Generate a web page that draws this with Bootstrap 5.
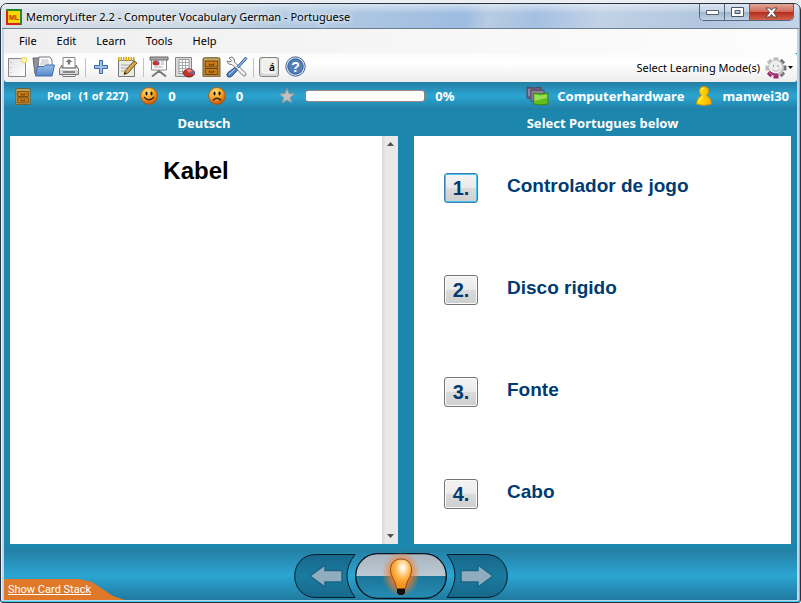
<!DOCTYPE html>
<html lang="en">
<head>
<meta charset="utf-8">
<meta name="viewport" content="width=device-width, initial-scale=1">
<title>MemoryLifter 2.2 - Computer Vocabulary German - Portuguese</title>
<link rel="stylesheet" href="https://cdn.jsdelivr.net/npm/bootstrap@5.3.0/dist/css/bootstrap.min.css">
<style>
:root{--teal:#1c86ac;--navy:#003b72}
body{font-family:"Noto Sans","Open Sans",sans-serif;font-size:11px;line-height:16px;color:#000;background:#eceef1;padding-top:3px}
svg{display:block;flex:none}
button,.plain-btn{border:0;background:none;padding:0;color:inherit}
.app-window{border:1px solid #263442;border-radius:7px 7px 3px 3px;background:#c3d4e8;padding:0 3px 2px;box-shadow:inset -1px -1px #3fc8ee,inset 1px 0 #eef4fa;overflow:hidden;min-height:calc(100vh - 3px)}
.title-bar{height:25px;margin:0 -2px;padding:2px 2px 0 4px;background:linear-gradient(#ffffff80,#ffffff00 40%),linear-gradient(100deg,#d5dde6 0,#ccd9e5 25%,#b5cce2 34%,#a9c4e2 48%,#9dbce0 58%,#b8cce2 61%,#a4c0e2 67%,#c2d2e6 75%,#b1c6df 88%,#c3d4e8);border-bottom:1px solid #6f7c8c}
.title-text{text-shadow:0 0 5px #fff,0 0 7px #fff}
.caption-group{border:1px solid #55677c;border-top:0;border-radius:0 0 5px 5px;height:17px;margin-top:-2px;overflow:hidden;margin-right:3px}
.caption-group button{width:25px;display:flex;align-items:center;justify-content:center;border-right:1px solid #55677c;background:linear-gradient(#dce6f1,#c4d2e2 48%,#a0b4ca 50%,#c1d3e6)}
.caption-group .close-btn{width:43px;border:0;background:linear-gradient(#e5a596,#cf6a58 48%,#b02a1b 50%,#d0644b)}
.main-menu{height:24px;background:linear-gradient(90deg,#efeff0,#fdfdfd);padding-left:5px}
.main-menu .nav-link{color:#000;padding:0 10px;line-height:24px}
.tool-strip{height:29px;background:linear-gradient(#fbfbfb,#fff 35%,#ededed);border-radius:0 3px 3px 3px}
.tool-strip .tool-btn{width:26px;height:28px;display:flex;align-items:center;justify-content:center;padding-bottom:2px}
.tool-sep{width:6px;display:flex;justify-content:center}
.tool-sep::before{content:"";width:1px;height:19px;background:#c2c2c2}
.client-area{background:var(--teal)}
.status-strip{height:28px;background:linear-gradient(#247ea3,#2ba5d2 50%,#207fa5);color:#fff;font-size:13px;font-weight:700;padding:0 8px 0 11px}
.status-small{font-size:11px}
.gap-s{margin-left:10px}
.gap-m{margin-left:12px}
.gap-l{margin-left:32px}
.score-bar{appearance:none;width:120px;height:12px;border:1px solid #9c8578;border-radius:3px;background:#fff;overflow:hidden}
.score-bar::-webkit-progress-bar{background:#fff}
.card-grid{display:grid;grid-template-columns:388fr 377fr;column-gap:16px;padding:0 6px}
.side-title{font-size:13px;font-weight:700;color:#fff;text-align:center;line-height:26px;margin:0}
.card-pane{background:#fff;height:calc(100vh - 195px);min-height:390px}
.question{font:700 24px/28px "Liberation Sans",Arial,sans-serif;color:#000;padding-top:21px}
.scroll-track{width:16px;background:linear-gradient(90deg,#d9d9d9,#e9e9e9 25%,#e9e9e9);padding:6px 0}
.answer-list{padding:37px 30px 0}
.answer-row{height:102px;gap:29px;font:700 19px/26px "Liberation Sans",Arial,sans-serif;color:var(--navy)}
.answer-btn{width:34px;height:30px;font-size:20px;font-weight:700;border:1px solid #747474;border-radius:3px;background:linear-gradient(#f3f3f3,#ebebeb 48%,#dbdbdb 50%,#cecece);box-shadow:inset 0 0 0 1px #fbfbfb}
.answer-btn.is-default{border-color:#3b7fae;box-shadow:inset 0 0 0 1px #41c8f0}
.foot-bar{height:56px;border-top:5px solid var(--teal);background:linear-gradient(#247ea3,#2ba5d2 52%,#207a9f);background-clip:padding-box;position:relative}
.nav-cluster{height:51px;padding-top:2px}
.stack-link{position:absolute;left:0;bottom:0;width:121px;height:21px;background:#df7828;color:#fff;font-family:Roboto,sans-serif;line-height:21px;padding-left:4px;clip-path:polygon(0 0,75px 0,88px 3px,97px 9px,109px 17px,121px 21px,0 21px)}
.stack-link:hover{color:#fff}
</style>
<script src="https://cdn.jsdelivr.net/npm/bootstrap@5.3.0/dist/js/bootstrap.bundle.min.js"></script>
</head>
<body>
<svg width="0" height="0" class="position-absolute" aria-hidden="true">
<defs>
<radialGradient id="face" cx=".4" cy=".25" r=".75"><stop offset="0" stop-color="#ffdf73"/><stop offset=".5" stop-color="#f9a92c"/><stop offset="1" stop-color="#c85208"/></radialGradient>
<linearGradient id="folder" x2="0" y2="1"><stop stop-color="#9dbde6"/><stop offset="1" stop-color="#5687c8"/></linearGradient>
<linearGradient id="sheet" x2="1" y2="1"><stop stop-color="#e2e2e2"/><stop offset="1" stop-color="#fff"/></linearGradient>
<linearGradient id="glass" x2="0" y2="1"><stop stop-color="#a9b4bd"/><stop offset=".5" stop-color="#bccad5"/><stop offset=".5" stop-color="#1b7699"/><stop offset="1" stop-color="#268cb3"/></linearGradient>
<linearGradient id="wing" x2="0" y2="1"><stop stop-color="#18678a"/><stop offset=".5" stop-color="#1a7ba0"/><stop offset="1" stop-color="#16688a"/></linearGradient>
<radialGradient id="halo"><stop offset="0" stop-color="#ff7a22"/><stop offset=".5" stop-color="#ff7a22" stop-opacity=".8"/><stop offset="1" stop-color="#ff7a22" stop-opacity="0"/></radialGradient>
<radialGradient id="lamp" cx=".58" cy=".3" r=".6"><stop stop-color="#fff"/><stop offset=".25" stop-color="#ffe5bd"/><stop offset=".6" stop-color="#ffb247"/><stop offset="1" stop-color="#f59220"/></radialGradient>
<linearGradient id="gold" x2="1"><stop stop-color="#ffe900"/><stop offset="1" stop-color="#ffae00"/></linearGradient>
<symbol id="cabinet" viewBox="0 0 18 20" preserveAspectRatio="none"><path d="M1 2Q1 .7 3 .7H15Q17 .7 17 2V19.3H1Z" fill="#c1a96b" stroke="#6f5218"/><path d="M3 4H15V10H3ZM3 11.500H15V17.500H3Z" fill="#c97b17" stroke="#75430a"/><path d="M7 6.500V8H11V6.500M7 13.500V15H11V13.500" fill="none" stroke="#5c3507"/></symbol>
</defs></svg>

<div class="app-window d-flex flex-column">
<header class="title-bar d-flex align-items-center">
<svg width="16" height="16" viewBox="0 0 16 16"><path d="M0 0H16V16H0Z" fill="#26852f"/><path d="M0 2H2V14H14V16H0Z" fill="#dc2114"/><path d="M2 2H14V14H2Z" fill="#ffd800"/><text x="8" y="11" text-anchor="middle" font-family="Liberation Sans" font-size="7" font-weight="700" fill="#d12512">ML</text></svg>
<span class="title-text ms-1">MemoryLifter 2.2 - Computer Vocabulary German - Portuguese</span>
<div class="caption-group d-flex ms-auto align-self-start">
<button type="button" aria-label="Minimize"><svg width="13" height="6" viewBox="0 0 13 6"><path d="M.5 1.500H12.500V5.500H.5Z" fill="#fff" stroke="#55606e"/></svg></button>
<button type="button" aria-label="Maximize"><svg width="13" height="10" viewBox="0 0 13 10"><path d="M.5.5H12.500V9.500H.5ZM4 3.500V6.500H9V3.500Z" fill="#fff" fill-rule="evenodd" stroke="#4b5663"/></svg></button>
<button type="button" class="close-btn" aria-label="Close"><svg width="13" height="11" viewBox="0 0 13 11"><path d="M1 1H4.500L6.500 3.200 8.500 1H12L8.500 5.400 12 10H8.500L6.500 7.600 4.500 10H1L4.500 5.400Z" fill="#fff" stroke="#59464c"/></svg></button>
</div>
</header>

<nav class="main-menu nav flex-nowrap" aria-label="Main">
<a class="nav-link" href="#">File</a><a class="nav-link" href="#">Edit</a><a class="nav-link" href="#">Learn</a><a class="nav-link" href="#">Tools</a><a class="nav-link" href="#">Help</a>
</nav>

<div class="client-area d-flex flex-column flex-grow-1">
<div class="tool-strip d-flex align-items-center" role="toolbar" aria-label="Tools">
<button class="tool-btn" type="button" aria-label="New"><svg width="20" height="22" viewBox="0 0 20 22"><path d="M1.500 2.500H18.500V20.500H1.500Z" fill="url(#sheet)" stroke="#888"/><path d="M4 6V18" stroke="#aaa" stroke-dasharray="1 4"/><circle cx="17" cy="4" r="2.500" fill="#fff9cf" stroke="#eddf68" stroke-width="1.500"/></svg></button>
<button class="tool-btn" type="button" aria-label="Open"><svg width="23" height="22" viewBox="0 0 23 22"><path d="M1 2H7L8 4H18V18H3Z" fill="#8c9299" stroke="#666"/><path d="M7 1H18L20 4V13H6Z" fill="#fff" stroke="#777"/><path d="M9 4H16M9 6H17M8 8H17" stroke="#bbb"/><path d="M5.500 10.500H12L13.500 9H22.500L20 20H3.500Z" fill="url(#folder)" stroke="#3e6cad"/></svg></button>
<button class="tool-btn" type="button" aria-label="Print"><svg width="22" height="22" viewBox="0 0 22 22"><path d="M5 1.500H17V12H5Z" fill="#fff" stroke="#888"/><path d="M11 3L7.500 6H9.800V8.500H12.200V6H14.500Z" fill="#777"/><path d="M4 9L1.500 13V18.500H20.500V13L18 9V12H4Z" fill="#d8d8d8" stroke="#777"/><path d="M2 13.500H20" stroke="#fff"/><path d="M5 15H17V17H5Z" fill="#888"/><path d="M4 18.500H18L17 20.500H5Z" fill="#eee" stroke="#777"/></svg></button>
<span class="tool-sep"></span>
<button class="tool-btn" type="button" aria-label="Add card"><svg width="16" height="16" viewBox="0 0 16 16"><path d="M6.500 1.500H9.500V6.500H14.500V9.500H9.500V14.500H6.500V9.500H1.500V6.500H6.500Z" fill="#a0bfe4" stroke="#3c69a9"/></svg></button>
<button class="tool-btn" type="button" aria-label="Edit card"><svg width="22" height="22" viewBox="0 0 22 22"><path d="M2.500 4.500H18.500V20.500H2.500Z" fill="#ebebe6" stroke="#777"/><path d="M2 3H19" stroke="#d2a70b" stroke-width="4" stroke-dasharray="1.500 1"/><path d="M5 9H14M5 12H12M5 15H11" stroke="#aaa"/><path d="M18 5L21 7 12 17 8 18.500 9.500 14.500Z" fill="#d9a54c" stroke="#70501e"/><path d="M8 18.500L9 16 10.500 17.500Z" fill="#222"/></svg></button>
<span class="tool-sep"></span>
<button class="tool-btn" type="button" aria-label="Slide show"><svg width="20" height="22" viewBox="0 0 20 22"><path d="M10 13V17M10 15L3 20.500M10 15L17 20.500" stroke="#777" stroke-width="2"/><path d="M2.500 3H17.500V14H2.500Z" fill="#fff" stroke="#888"/><path d="M1 1H19V4H1Z" fill="#aaa" stroke="#666"/><ellipse cx="7" cy="7" rx="3.500" ry="2.500" fill="#cc2d25"/><path d="M7 7L9 4.500 10.500 7Z" fill="#4e8cda"/><path d="M12 6H15M12 8H15M5 11H14" stroke="#aaa"/></svg></button>
<button class="tool-btn" type="button" aria-label="Statistics"><svg width="22" height="22" viewBox="0 0 22 22"><path d="M1.500 1.500H17.500V20.500H1.500Z" fill="#d9d9d9" stroke="#888"/><path d="M5 3.500H15V17.500H5Z" fill="#fff" stroke="#999"/><path d="M5 6.500H15M5 9.500H15M5 12.500H15M5 15.500H10M8.500 4V17M11.500 4V13" stroke="#aaa"/><ellipse cx="15" cy="17" rx="5.500" ry="4" fill="#c93228" stroke="#702020"/><path d="M15 17L12 13.500Q16 12 19 14.500Z" fill="#ef8178"/><path d="M15 17L19 14.500Q21 16 20.500 18Z" fill="#5379b9"/></svg></button>
<button class="tool-btn" type="button" aria-label="Card boxes"><svg width="19" height="20"><use href="#cabinet"/></svg></button>
<button class="tool-btn" type="button" aria-label="Options"><svg width="22" height="22" viewBox="0 0 22 22"><path d="M3 2L6 1Q9 2 8.500 6L19 16.500Q21 18 19.500 19.500 18 21 16.500 19L6 8.500Q2 9 1 5L4 6 5.500 4.500Z" fill="#f3f3f3" stroke="#777"/><path d="M19.500 1L21 2.500 12.500 12 11 10.500Z" fill="#87ace0" stroke="#4268a0"/><path d="M9 11.500L11.500 14 6 20Q3 22 1.500 20.500 0 19 2 16.500Z" fill="#5587c9" stroke="#244c88"/><path d="M3 18.500L9 13" stroke="#bad1f0"/></svg></button>
<span class="tool-sep"></span>
<button class="tool-btn" type="button" aria-label="Character map"><svg width="20" height="20" viewBox="0 0 20 20"><rect x=".5" y=".5" width="19" height="19" rx="2" fill="#d7d8d4" stroke="#858681"/><rect x="3" y="2" width="14" height="14" rx="2" fill="#efefeb" stroke="#fff"/><text x="13" y="14" text-anchor="middle" font-family="Noto Sans" font-weight="600" font-size="10">á</text></svg></button>
<button class="tool-btn" type="button" aria-label="Help"><svg width="21" height="21" viewBox="0 0 21 21"><circle cx="10.500" cy="10.500" r="9.700" fill="#dce7f5" stroke="#496792"/><circle cx="10.500" cy="10.500" r="7.700" fill="#527fba" stroke="#315a95"/><text x="10.500" y="15.500" text-anchor="middle" font-family="Liberation Sans" font-weight="700" font-size="14" fill="#fff">?</text></svg></button>
<button class="plain-btn d-flex align-items-center ms-auto me-1" type="button"><span>Select Learning Mode(s)</span>
<svg class="ms-1" width="24" height="24" viewBox="0 0 24 24"><g stroke-width="5" fill="none"><path d="M12 12V1.500M12 12L4.600 4.600M12 12H1.500" stroke="#b9b9b9"/><path d="M12 12L19.400 4.600M12 12H22.500M12 12L19.400 19.400" stroke="#777"/><path d="M12 12L4.600 19.400M12 12V22.500" stroke="#a3246a"/></g><circle cx="12" cy="12" r="8" fill="#c4c4c4"/><path d="M5 15A8 8 0 0 0 15 19.400L12 16Z" fill="#a3246a"/><circle cx="11.500" cy="11" r="6.500" fill="#eee"/><path d="M9.500 9V11M14 9V11" stroke="#999"/><path d="M8.500 13Q12 17 15.500 13" fill="#fff" stroke="#aaa"/></svg>
<svg width="5" height="3" viewBox="0 0 5 3"><path d="M0 0H5L2.500 3Z"/></svg></button>
</div>

<div class="status-strip d-flex align-items-center text-nowrap">
<svg width="16" height="17"><use href="#cabinet"/></svg>
<span class="status-small ms-3">Pool</span><span class="status-small ms-2">(1 of 227)</span>
<svg class="gap-m" width="18" height="18" viewBox="0 0 18 18" role="img" aria-label="Right answers"><circle cx="9" cy="9" r="8.500" fill="url(#face)" stroke="#ad4b08" stroke-width=".7"/><ellipse cx="6.500" cy="6.500" rx="1" ry="2"/><ellipse cx="11.500" cy="6.500" rx="1" ry="2"/><path d="M4 10Q9 15.500 14 10" fill="none" stroke="#43220b" stroke-width="1.300"/></svg>
<span class="gap-s">0</span>
<svg class="gap-l" width="18" height="18" viewBox="0 0 18 18" role="img" aria-label="Wrong answers"><circle cx="9" cy="9" r="8.500" fill="url(#face)" stroke="#ad4b08" stroke-width=".7"/><ellipse cx="6.500" cy="6.500" rx="1" ry="2"/><ellipse cx="11.500" cy="6.500" rx="1" ry="2"/><path d="M5 13.500Q9 9 13 13.500" fill="none" stroke="#43220b" stroke-width="1.300"/></svg>
<span class="gap-s me-1">0</span>
<svg class="gap-l" width="16" height="16" viewBox="0 0 16 16"><path d="M8 .5L10 5.500 15.500 6 11.300 9.500 12.800 15 8 12 3.200 15 4.700 9.500.5 6 6 5.500Z" fill="#bfc2c3" stroke="#8c9295"/></svg>
<progress class="score-bar gap-s" value="0" max="100" aria-label="Score"></progress><span class="gap-s">0%</span>
<svg class="ms-auto" width="23" height="20" viewBox="0 0 23 20"><path d="M1 1Q8 3 15 1V12Q8 14 1 12Z" fill="#70607b" stroke="#51465b"/><path d="M3 3V10" stroke="#b4a9be"/><path d="M5 4Q12 5 18 4V15Q11 17 5 15Z" fill="#8e8098" stroke="#564b60"/><path d="M7.500 7Q15 9 22 7V18Q15 20 7.500 18Z" fill="#62bd1d" stroke="#3b8515"/><path d="M8.500 8.500Q15 10 21 8.500V12Q15 13 8.500 15Z" fill="#98dd55"/></svg>
<span class="ms-2">Computerhardware</span>
<svg class="gap-m" width="16" height="20" viewBox="0 0 16 20"><path d="M8 .7Q12.500.7 12.500 5 12.500 7.500 10.500 9.500 15.300 12 15.300 18 8 20.500.7 18 .7 12 5.500 9.500 3.500 7.500 3.500 5 3.500.7 8 .7Z" fill="url(#gold)" stroke="#dc9500"/><path d="M3 16Q4 12 7 10.500M5 5Q5 2 8 2" fill="none" stroke="#fff79d"/></svg>
<span class="gap-s">manwei30</span>
</div>

<main class="card-grid flex-grow-1">
<section><h2 class="side-title">Deutsch</h2>
<div class="card-pane d-flex"><div class="question flex-grow-1 text-center">Kabel</div>
<div class="scroll-track d-flex flex-column justify-content-between align-items-center"><button type="button" aria-label="Scroll up"><svg width="7" height="4"><path d="M0 4H7L3.500 0Z" fill="#505050"/></svg></button><button type="button" aria-label="Scroll down"><svg width="7" height="4"><path d="M0 0H7L3.500 4Z" fill="#505050"/></svg></button></div></div></section>
<section><h2 class="side-title">Select Portugues below</h2>
<div class="card-pane answer-list">
<div class="answer-row d-flex align-items-start"><button id="a1" class="answer-btn is-default" type="button">1.</button><label for="a1">Controlador de jogo</label></div>
<div class="answer-row d-flex align-items-start"><button id="a2" class="answer-btn" type="button">2.</button><label for="a2">Disco rigido</label></div>
<div class="answer-row d-flex align-items-start"><button id="a3" class="answer-btn" type="button">3.</button><label for="a3">Fonte</label></div>
<div class="answer-row d-flex align-items-start"><button id="a4" class="answer-btn" type="button">4.</button><label for="a4">Cabo</label></div>
</div></section>
</main>

<footer class="foot-bar">
<div class="nav-cluster d-flex justify-content-center">
<button type="button" aria-label="Previous"><svg width="61" height="46" viewBox="0 0 61 46" overflow="visible"><path d="M22 1.500H61Q45 22 61 44.500H22C8 44.500.7 34 .7 23S8 1.500 22 1.500Z" fill="url(#wing)" stroke="#001e2c"/><path d="M16 23L31 12V17.500H48V29H31V34Z" fill="#8fadbf" stroke="#1b6585" stroke-width="1.500"/></svg></button>
<button type="button" aria-label="Show answer"><svg width="92" height="46" viewBox="0 0 92 46"><rect x=".7" y=".7" width="90.600" height="44.600" rx="22" fill="url(#glass)" stroke="#061018" stroke-width="1.300"/><ellipse cx="46" cy="21" rx="19" ry="23" fill="url(#halo)"/><path d="M46 6C39 6 35.500 11 35.500 16.500 35.500 24 40.500 27 41.500 35.500H50.500C51.500 27 56.500 24 56.500 16.500 56.500 11 53 6 46 6Z" fill="url(#lamp)" stroke="#8b4d12"/><path d="M42 36H50V40L48 42H44L42 40Z" fill="#130d0b"/></svg></button>
<button type="button" aria-label="Next"><svg width="61" height="46" viewBox="0 0 61 46" overflow="visible"><path d="M39 1.500H0Q16 22 0 44.500H39C53 44.500 60.300 34 60.300 23S53 1.500 39 1.500Z" fill="url(#wing)" stroke="#001e2c"/><path d="M46 23L31 12V17.500H14V29H31V34Z" fill="#8fadbf" stroke="#1b6585" stroke-width="1.500"/></svg></button>
</div>
<a class="stack-link" href="#">Show Card Stack</a>
</footer>
</div>
</div>
</body>
</html>
